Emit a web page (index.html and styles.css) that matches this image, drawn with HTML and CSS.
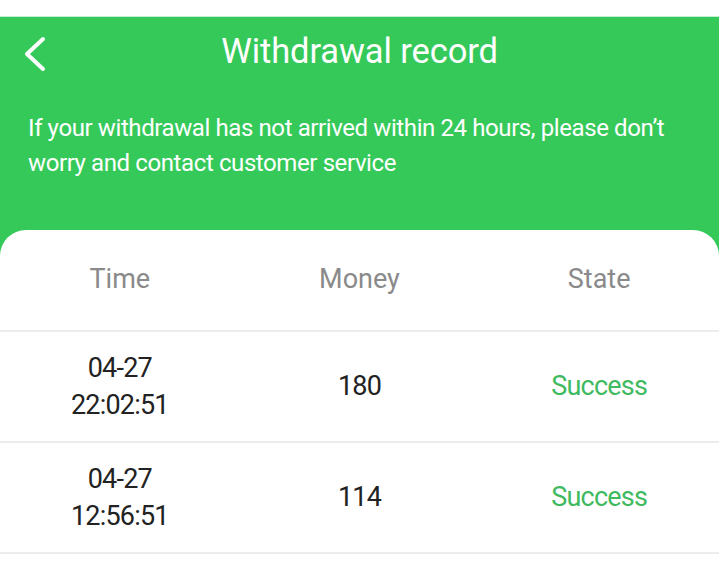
FILE: index.html
```html
<!DOCTYPE html>
<html>
<head>
<meta charset="utf-8">
<link rel="stylesheet" href="styles.css">
</head>
<body>
<div class="topbar"></div>
<div class="hero">
  <div class="navbar">
    <svg class="back" width="24" height="36" viewBox="0 0 24 36"><polyline points="20,3 4,18 20,33" fill="none" stroke="#ffffff" stroke-width="4" stroke-linecap="round" stroke-linejoin="round"/></svg>
    <div class="title">Withdrawal record</div>
  </div>
  <p class="notice">If your withdrawal has not arrived within 24 hours, please don’t worry and contact customer service</p>
</div>
<div class="card">
  <div class="row head">
    <div class="cell">Time</div>
    <div class="cell">Money</div>
    <div class="cell">State</div>
  </div>
  <div class="row">
    <div class="cell">04-27<br>22:02:51</div>
    <div class="cell">180</div>
    <div class="cell ok">Success</div>
  </div>
  <div class="row">
    <div class="cell">04-27<br>12:56:51</div>
    <div class="cell">114</div>
    <div class="cell ok">Success</div>
  </div>
</div>
</body>
</html>
```
FILE: styles.css
```css
* { box-sizing: border-box; }
body {
  margin: 0;
  background: #ffffff;
  font-family: Roboto, "Liberation Sans", sans-serif;
}
.topbar {
  height: 17px;
  background: #ffffff;
  border-bottom: 1px solid #c8eed2;
}
.hero {
  background: #35c95a;
  padding: 0 0 75px;
  color: #ffffff;
}
.navbar {
  position: relative;
  height: 70px;
  display: flex;
  align-items: center;
  justify-content: center;
}
.back {
  position: absolute;
  left: 23px;
  top: 19px;
}
.title {
  font-size: 34.5px;
  line-height: 40px;
  letter-spacing: -0.1px;
  margin-top: -2px;
}
.notice {
  margin: 24px 0 0;
  padding: 0 28px;
  font-size: 24px;
  letter-spacing: -0.4px;
  line-height: 35px;
}
.card {
  position: relative;
  margin-top: -26px;
  background: #ffffff;
  border-radius: 26px 26px 0 0;
}
.row {
  display: grid;
  grid-template-columns: 1fr 1fr 1fr;
  align-items: center;
  height: 111px;
  border-bottom: 2px solid #ececec;
  font-size: 27px;
  letter-spacing: -0.8px;
  line-height: 37px;
  color: #222222;
}
.row.head {
  height: 102px;
  color: #8a8a8a;
  font-size: 27px;
  letter-spacing: 0;
  padding-bottom: 1px;
}
.cell { text-align: center; }
.ok { color: #3fba5f; }
```
